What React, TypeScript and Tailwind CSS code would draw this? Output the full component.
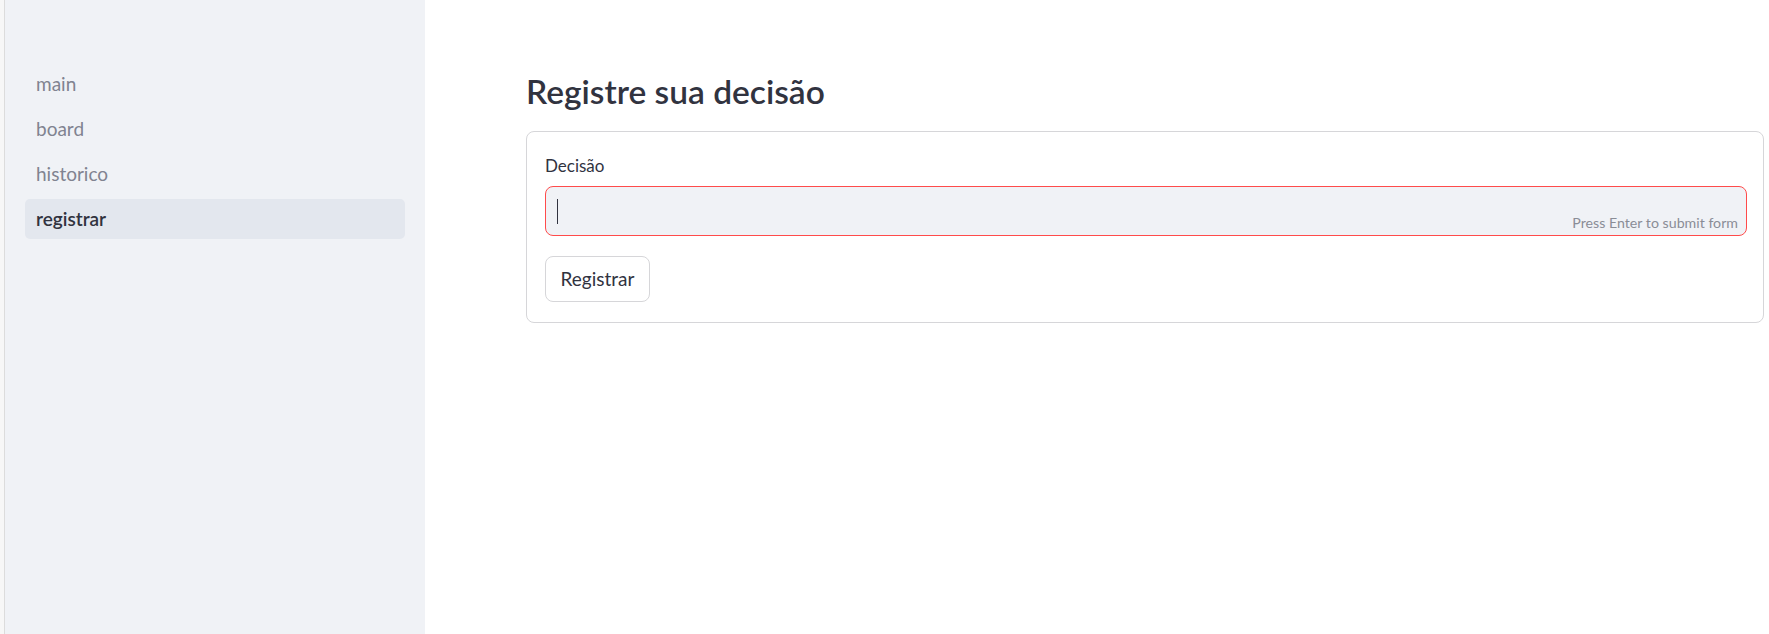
import React from 'react';

const pages = ['main', 'board', 'historico', 'registrar'];

function Sidebar() {
  return (
    <div className="flex h-full">
      <div className="w-[4px] bg-[#f7f7f7]" />
      <aside className="w-[421px] border-l border-[#dcdcdc] bg-[#f0f2f6] pt-[64px]">
        <nav className="flex flex-col gap-[5px] px-[20px]">
          {pages.map((p) => {
            const active = p === 'registrar';
            return (
              <div
                key={p}
                className={
                  active
                    ? 'flex h-[40px] items-center rounded-[5px] bg-[#e3e7ee] pl-[11px] text-[19px] font-semibold text-[#31333f]'
                    : 'flex h-[40px] items-center rounded-[5px] pl-[11px] text-[19px] text-[#808390]'
                }
              >
                {p}
              </div>
            );
          })}
        </nav>
      </aside>
    </div>
  );
}

function DecisionForm() {
  return (
    <div className="rounded-[8px] border border-[#d6d6d9] pb-[20px] pl-[18px] pr-[16px] pt-[22px]">
      <label className="block text-[17px] leading-[24px] text-[#31333f]">Decisão</label>
      <div className="mt-[8px] flex h-[50px] items-stretch rounded-[8px] border border-[#ff4b4b] bg-[#f0f2f6]">
        <div className="flex flex-1 items-center pl-[11px]">
          <span className="h-[25px] w-[1px] bg-[#31333f]" />
        </div>
        <div className="flex items-end pb-[2px] pr-[8px] text-[14.2px] text-[#8a8d96]">
          Press Enter to submit form
        </div>
      </div>
      <button className="mt-[20px] h-[46px] w-[105px] rounded-[8px] border border-[#d6d6d9] bg-white text-[19px] text-[#31333f]">
        Registrar
      </button>
    </div>
  );
}

export default function App() {
  return (
    <div
      className="flex h-[634px] w-full overflow-hidden bg-white"
      style={{ fontFamily: "'Lato', 'Noto Sans', sans-serif" }}
    >
      <Sidebar />
      <main className="flex-1 pl-[101px] pr-[5px] pt-[68px]">
        <h1 className="mb-[17px] text-[33.5px] font-semibold leading-[46px] text-[#31333f]">
          Registre sua decisão
        </h1>
        <DecisionForm />
      </main>
    </div>
  );
}
